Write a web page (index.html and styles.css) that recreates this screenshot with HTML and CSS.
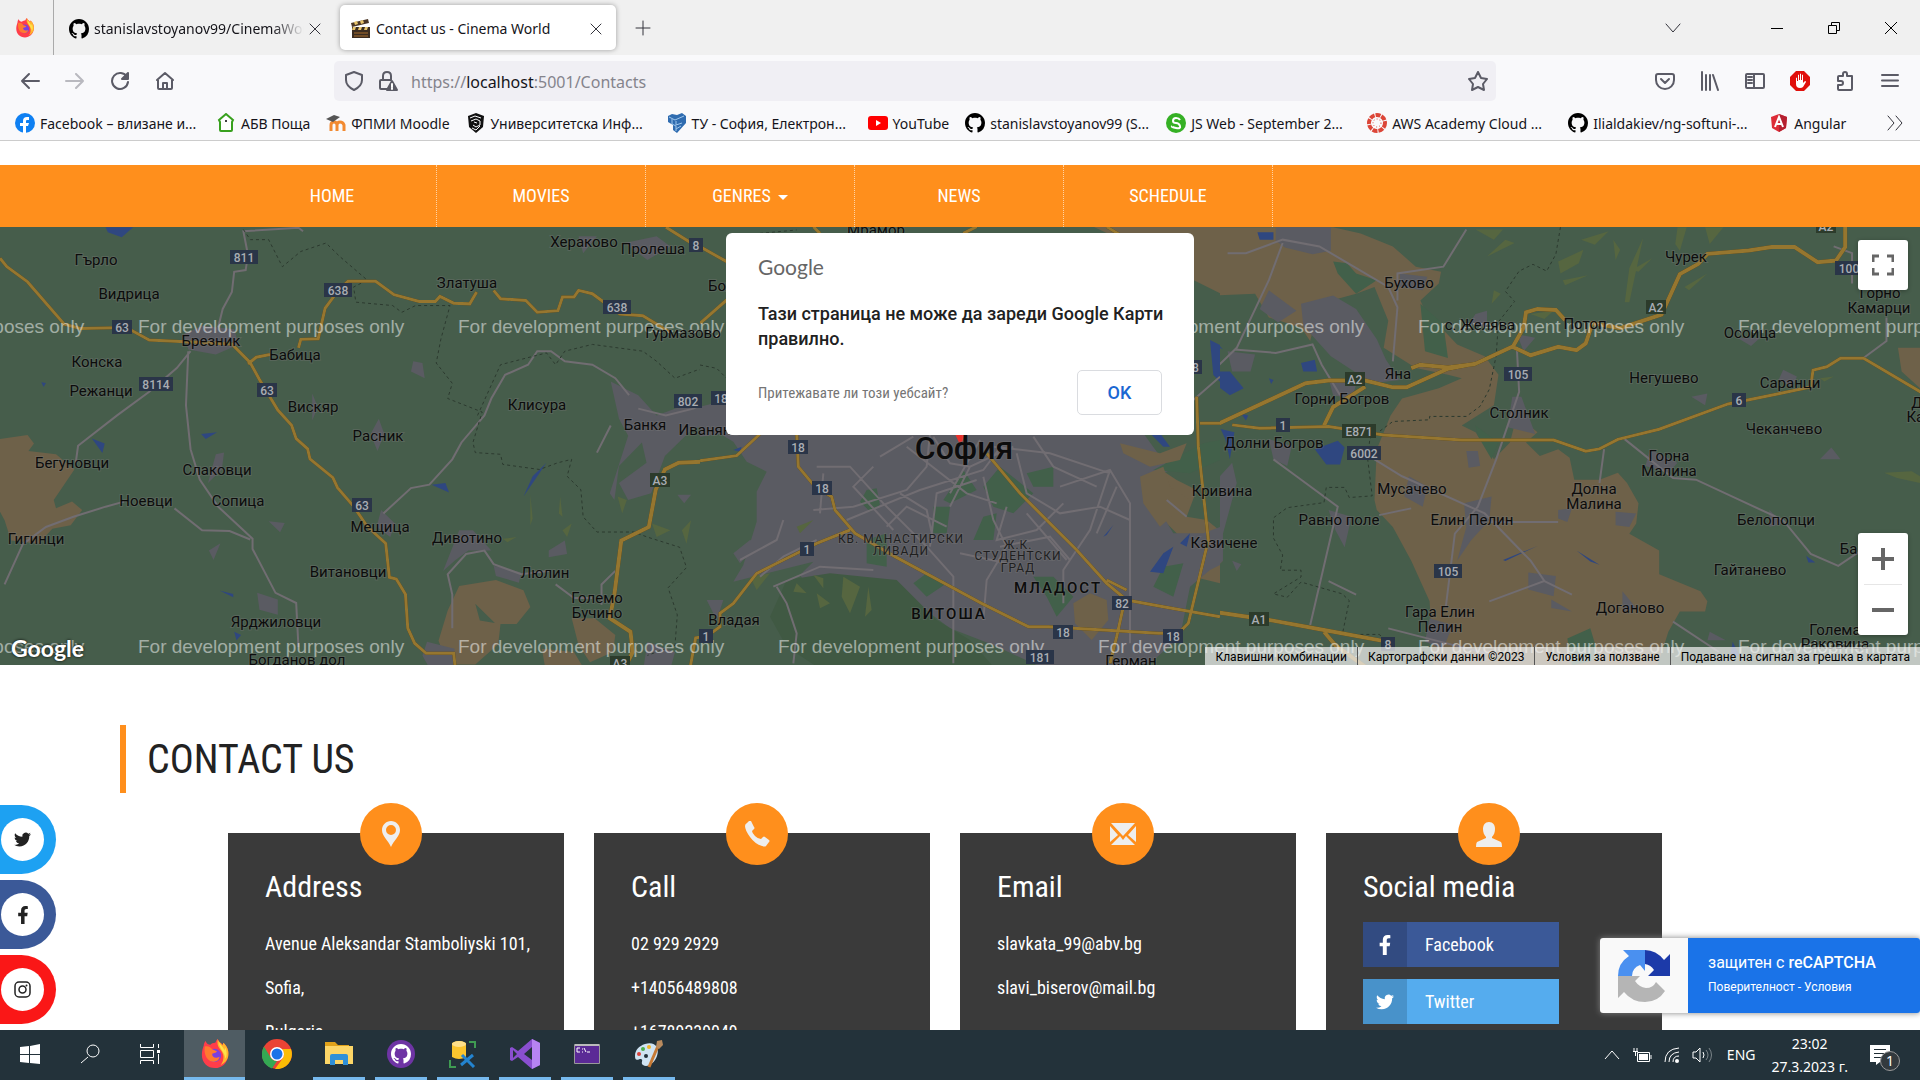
FILE: index.html
```html
<!DOCTYPE html>
<html lang="bg">
<head>
<meta charset="utf-8">
<title>Contact us - Cinema World</title>
<link rel="stylesheet" href="styles.css">
</head>
<body>
<svg class="defs" aria-hidden="true">
  <symbol id="github" viewBox="0 0 16 16"><path d="M8 0C3.58 0 0 3.58 0 8c0 3.54 2.29 6.53 5.47 7.59.4.07.55-.17.55-.38 0-.19-.01-.82-.01-1.49-2.01.37-2.53-.49-2.69-.94-.09-.23-.48-.94-.82-1.13-.28-.15-.68-.52-.01-.53.63-.01 1.08.58 1.23.82.72 1.21 1.87.87 2.33.66.07-.52.28-.87.51-1.07-1.78-.2-3.64-.89-3.64-3.95 0-.87.31-1.59.82-2.15-.08-.2-.36-1.02.08-2.12 0 0 .67-.21 2.2.82.64-.18 1.32-.27 2-.27s1.36.09 2 .27c1.53-1.04 2.2-.82 2.2-.82.44 1.1.16 1.92.08 2.12.51.56.82 1.27.82 2.15 0 3.07-1.87 3.75-3.65 3.95.29.25.54.73.54 1.48 0 1.07-.01 1.93-.01 2.2 0 .21.15.46.55.38A8.01 8.01 0 0016 8c0-4.42-3.58-8-8-8z"/></symbol>
  <symbol id="twitter" viewBox="0 0 24 24"><path d="M23.953 4.57a10 10 0 01-2.825.775 4.958 4.958 0 002.163-2.723c-.951.555-2.005.959-3.127 1.184a4.92 4.92 0 00-8.384 4.482C7.69 8.095 4.067 6.13 1.64 3.162a4.822 4.822 0 00-.666 2.475c0 1.71.87 3.213 2.188 4.096a4.904 4.904 0 01-2.228-.616v.06a4.923 4.923 0 003.946 4.827 4.996 4.996 0 01-2.212.085 4.936 4.936 0 004.604 3.417 9.867 9.867 0 01-6.102 2.105c-.39 0-.779-.023-1.17-.067a13.995 13.995 0 007.557 2.209c9.053 0 13.998-7.496 13.998-13.985 0-.21 0-.42-.015-.63A9.935 9.935 0 0024 4.59z"/></symbol>
  <symbol id="facebook" viewBox="0 0 320 512"><path d="M279.14 288l14.22-92.66h-88.91v-60.13c0-25.35 12.42-50.06 52.24-50.06h40.42V6.26S260.43 0 225.36 0c-73.22 0-121.08 44.38-121.08 124.72v70.62H22.89V288h81.39v224h100.17V288z"/></symbol>
  <symbol id="firefox" viewBox="0 0 32 32">
    <path fill="#ff3d4a" d="M4 7c0-2 1-4 2-5 1 3 3 4 5 4 1-1 3-2 5-2 1 0 1-3 3-4 1 4 4 4 5 6l1-2c4 4 6 8 5 14-1 8-7 13-14 13C8 31 2 25 2 17c0-4 1-7 2-10z"/>
    <path fill="#ffb52b" d="M19 0c1 4 4 4 5 7l1-3c5 5 6 10 5 15-1 4-4 7-8 9 3-4 4-9 2-13-1-4-7-6-5-15z"/>
    <path fill="#ffe14b" d="M20 3c1 3 4 4 6 9l1-3c2 5 2 9 0 12 0-6-6-9-7-18z"/>
    <circle cx="15.500" cy="17.500" r="7" fill="#7b3fe0"/>
    <path fill="#ff7a2f" d="M5 8c3-1 6 0 8 3l5 2c0 2-5 2-5 3 0 4 4 5 8 3-1 4-4 6-8 5-6-1-9-8-8-16z"/>
  </symbol>
  <symbol id="sh1" viewBox="0 0 34 16"><rect x="10" y="1" width="14" height="14"/></symbol>
  <symbol id="sh2" viewBox="0 0 34 16"><rect x="7" y="1" width="20" height="14"/></symbol>
  <symbol id="sh3" viewBox="0 0 34 16"><rect x="3" y="1" width="28" height="14"/></symbol>
  <symbol id="sh4" viewBox="0 0 34 16"><rect x="0" y="1" width="34" height="14"/></symbol>
</svg>

<header class="browser">
  <div class="tabs">
    <div class="tab-pinned"><svg class="i20"><use href="#firefox"/></svg></div>
    <div class="tab">
      <svg class="i20"><use href="#github"/></svg>
      <span class="tab-title tab-title-fade">stanislavstoyanov99/CinemaWorld</span>
      <button class="plain" aria-label="Close tab"><svg width="12" height="12" class="line"><path d="M1 1l10 10M11 1L1 11"/></svg></button>
    </div>
    <div class="tab tab-active">
      <svg class="i20" viewBox="0 0 20 20"><path fill="#3b2c20" d="M1 8h18v11H1z"/><path fill="#4a3525" d="M0 4l17-4 1 4L1 8z"/><path fill="#e8c46b" d="M3 3l3-1 1 3-3 1zM9 2l3-1 1 3-3 1zM2 8h3l-1 3H1zM8 8h3l-1 3H7zM14 8h3l-1 3h-3z"/><path stroke="#a86d2c" d="M3 14h14M3 17h14"/></svg>
      <span class="tab-title">Contact us - Cinema World</span>
      <button class="plain" aria-label="Close tab"><svg width="12" height="12" class="line"><path d="M1 1l10 10M11 1L1 11"/></svg></button>
    </div>
    <button class="plain tab-new" aria-label="New tab"><svg width="16" height="16" class="line"><path d="M8 1v14M1 8h14"/></svg></button>
    <div class="window-controls">
      <button class="plain win-list" aria-label="List tabs"><svg width="16" height="16" class="line"><path d="M1 4l7 8 7-8"/></svg></button>
      <button class="plain" aria-label="Minimize"><svg width="14" height="14" class="black"><path d="M1 7.500h12"/></svg></button>
      <button class="plain" aria-label="Restore"><svg width="14" height="14" class="black"><path d="M1.500 4.500h8v8h-8zM4.500 4V1.500h8v8H10"/></svg></button>
      <button class="plain" aria-label="Close"><svg width="14" height="14" class="black"><path d="M1 1l12 12M13 1L1 13"/></svg></button>
    </div>
  </div>
  <div class="toolbar">
    <div class="nav-buttons">
      <button class="plain" aria-label="Back"><svg class="i20 line"><path d="M19 10H2M9 3l-7 7 7 7"/></svg></button>
      <button class="plain faded" aria-label="Forward"><svg class="i20 line"><path d="M1 10h17M11 3l7 7-7 7"/></svg></button>
      <button class="plain" aria-label="Reload"><svg class="i20 line"><path d="M17 6a8 8 0 1 0 1 5"/><path fill="#5b5b66" d="M18 2v6h-6z"/></svg></button>
      <button class="plain" aria-label="Home"><svg class="i20 line"><path d="M2 9l8-7 8 7M3 9v8q0 1 1 1h12q1 0 1-1V9M8 18v-6h4v6"/></svg></button>
    </div>
    <div class="urlbar">
      <svg class="i20 line"><path d="M10 1l8 3v5q0 6-8 10Q2 15 2 9V4z"/></svg>
      <svg class="i20 line"><path d="M5 9V5q0-4 4-4t4 4v4M9 18H3q-1 0-1-1v-7q0-1 1-1h10"/><path fill="#5b5b66" d="M14 10l5 9H9z"/><path stroke="#fff" d="M14 13v3M14 17v1"/></svg>
      <div class="url"><span class="url-dim">https://</span>localhost<span class="url-dim">:5001/Contacts</span></div>
      <button class="plain" aria-label="Bookmark this page"><svg class="i20 line"><path d="M10 1l3 6 6 1-4 5 1 6-6-3-6 3 1-6-4-5 6-1z"/></svg></button>
    </div>
    <div class="tool-icons">
      <button class="plain" aria-label="Pocket"><svg class="i20 line"><path d="M3 3h14q2 0 2 2v4a9 9 0 0 1-18 0V5q0-2 2-2zM6 8l4 4 4-4"/></svg></button>
      <button class="plain" aria-label="Library"><svg class="i20 line"><path d="M2 1v18M6 4v15M10 4v15M13 4l5 15"/></svg></button>
      <button class="plain" aria-label="Sidebars"><svg class="i20 line"><path d="M2 3h16q1 0 1 1v12q0 1-1 1H2q-1 0-1-1V4q0-1 1-1zM9 3v14M3 6h4M3 9h4M3 12h4"/></svg></button>
      <button class="plain" aria-label="AdBlock"><svg class="i20"><path fill="#e0100c" d="M6 0h8l6 6v8l-6 6H6l-6-6V6z"/><path fill="#fff" d="M6 7q1-1 1 0v3h1V4q1-1 1 0v5h1V3q1-1 1 0v6h1V4q1-1 1 0v8l2-2q1 0 1 1l-3 5q-1 1-3 1-4 0-4-4z"/></svg></button>
      <button class="plain" aria-label="Extensions"><svg class="i20 line"><path d="M3 8V6q0-1 1-1h4V3q0-2 2-2t2 2v2h5v13q0 1-1 1H4q-1 0-1-1v-4h3q2 0 2-2t-2-2H3z"/></svg></button>
      <button class="plain" aria-label="Menu"><svg class="i20 line"><path d="M2 4h16M2 9.500h16M2 15h16"/></svg></button>
    </div>
  </div>
  <nav class="bookmarks" aria-label="Bookmarks">
    <a class="bookmark long" href="#"><svg class="i20" viewBox="0 0 20 20"><circle cx="10" cy="10" r="10" fill="#0f80f2"/><path fill="#fff" d="M8 20v-7H5v-3h3V8q0-4 4-4h2v3h-2q-1 0-1 1v2h3l-1 3h-2v7z"/></svg>Facebook – влизане и...</a>
    <a class="bookmark" href="#"><svg class="i20" viewBox="0 0 20 20"><path fill="#fff" stroke="#38a01e" stroke-width="2" d="M5 18q-1 0-1-1V9L3 7l7-6 7 6-1 2v8q0 1-1 1z"/><circle cx="10" cy="8" r="1"/></svg>АБВ Поща</a>
    <a class="bookmark" href="#"><svg class="i20" viewBox="0 0 20 20"><path fill="none" stroke="#f28a31" stroke-width="3" d="M5 18v-6q0-3 3-3t3 3v6M11 12q0-3 3-3t4 3v6"/><path fill="#555" d="M0 6l8-4 6 2-7 5z"/></svg>ФПМИ Moodle</a>
    <a class="bookmark long" href="#"><svg class="i20" viewBox="0 0 20 20"><path fill="#111" d="M2 3l8-3 8 3-1 11-7 6-7-6z"/><path fill="none" stroke="#fff" d="M4 5l5-2 6 2M5 8l5-2 4 2v4l-4 2-3-2M8 9l3 1M6 15l4 2 4-4"/></svg>Университетска Инф...</a>
    <a class="bookmark long" href="#"><svg class="i20" viewBox="0 0 20 20"><path fill="#2f6cb0" d="M1 3l4-2 5 1 5-2 4 3v7l-9 10-4-3v-5l-5-3z"/><path fill="none" stroke="#9fc6ec" d="M2 4l6 3 9-4M5 6v5l4 2v5M9 8v4l6-2M9 16l5-3"/></svg>ТУ - София, Електрон...</a>
    <a class="bookmark" href="#"><svg class="i20" viewBox="0 0 20 20"><rect y="3" width="20" height="14" rx="3" fill="#f00"/><path fill="#fff" d="M8 7l5 3-5 3z"/></svg>YouTube</a>
    <a class="bookmark long" href="#"><svg class="i20"><use href="#github"/></svg>stanislavstoyanov99 (S...</a>
    <a class="bookmark long" href="#"><svg class="i20" viewBox="0 0 20 20"><circle cx="10" cy="10" r="10" fill="#35b024"/><path fill="none" stroke="#fff" stroke-width="2" d="M14 7q-1-2-4-2T7 8q0 2 3 2t4 3-4 2-4-2"/></svg>JS Web - September 2...</a>
    <a class="bookmark long" href="#"><svg class="i20" viewBox="0 0 20 20"><circle cx="10" cy="10" r="8" fill="none" stroke="#dc4638" stroke-width="4" stroke-dasharray="5 1"/><circle cx="10" cy="10" r="4" fill="none" stroke="#dc4638" stroke-dasharray="1 2"/></svg>AWS Academy Cloud ...</a>
    <a class="bookmark long" href="#"><svg class="i20"><use href="#github"/></svg>Ilialdakiev/ng-softuni-...</a>
    <a class="bookmark" href="#"><svg class="i20" viewBox="0 0 20 20"><path fill="#dd2c37" d="M10 1l8 3-1 11-7 4-7-4L2 4z"/><path fill="#b52030" d="M10 1l8 3-1 11-7 4z"/><path fill="none" stroke="#fff" stroke-width="2" d="M6 14l4-10 4 10M8 11h4"/></svg>Angular</a>
    <button class="plain bookmarks-more" aria-label="More bookmarks"><svg width="16" height="16" class="line"><path d="M1 1l6 7-6 7M9 1l6 7-6 7"/></svg></button>
  </nav>
</header>

<main class="page">
  <nav class="site-nav">
    <ul class="container menu">
      <li><a href="#">HOME</a></li>
      <li><a href="#">MOVIES</a></li>
      <li><a href="#">GENRES <span class="caret"></span></a></li>
      <li><a href="#">NEWS</a></li>
      <li><a href="#">SCHEDULE</a></li>
    </ul>
  </nav>

  <section class="map">
    <svg class="map-canvas" viewBox="0 0 1920 438" preserveAspectRatio="xMidYMid slice">
      <rect width="1920" height="438" fill="#465d4b"/>
      <!-- west tile -->
      <svg x="0" y="-82" width="720" height="530" viewBox="0 0 1568 1568" preserveAspectRatio="none">
        <path class="field" d="M0 870l60-12 14 25-12 22 60 10 40 45-25 50-20 40 5 25 35-20 22 25-25 45-40 10-30 45-60-10-14-60-20-50zM1000 1305l80-18 60 30 15 50-30 50-45 0-45-60 10 50 45 10-5 60-50 60-60 0-20-70 20-90zM1245 1400l50 0 45 50-5 50-50 30-25-50zM1180 1490l70 10 30 68-90 0z"/>
        <path class="city" d="M400 560l40-25 70 10 10 45-50 30-60-15zM900 640l20 5 5 45-30-20zM825 810l12 45-15 50-15-50zM470 915l18-5-5 50-30 40zM680 735l12 40-12 40zM585 1113l35 5-10 28zM455 1200l25-22-15 50zM560 1325l45 20 0 45-40-15zM1000 1140l30 0 40 60-50 0-30 30-25 30zM1075 1245l60 20-5 30-50-20zM1195 1200l35-30 5 40-40 10zM1330 700l60 40 40 60 60-30 78-40v90l-60 20-60 80-30 110-50 20-20-50 60-60-10-60-50 70-10 100-10-20 40-170-20-50zM930 1470l60 20 0 60-50 10-20-50zM1410 1470l60 30-10 50-60 10zM1360 290l70-20 30 30-50 40zM1260 270l40 0-30 50zM1475 1035l30 0-15 25zM830 1080l30 40-10 40-30-30z"/>
        <path class="water" d="M230 243h60l-25 30-30-15zM200 868l28 15-5 28zM438 855l35-5-25 20zM940 1005l30-5 8 28zM478 1318l30 10 0 10zM1190 940l-30 40-20 60 25-50zM510 1440l15 10-10 15zM90 702l10 2-5 12z"/>
        <path class="hill" d="M1155 1035l5 70-5 20zM1220 1040l5 60-8-10zM1255 1080l-20 80-10-20 20-20zM1345 1040l20 10-10 40zM1420 1120l40 20-30 20zM1505 1110l-10 70-10-40zM1095 1165l30-5-20 15z"/>
        <g class="minor"><path d="M660 255l-10-10-120 10 10 70-5 45-25 5-5 60-20 50-10 55M415 610l-30 50-60 70-70 70-85 90-5 50M410 610l-5 160 10 130 20 90 40 80 75 95 0 30 50 130 45 30 5 130M10 1300l40-120 50-50 60-30 70-30 40-15M380 1075l60 65 60 2 45 25M835 1090l60-75 40-10 50-75 20-50 50-80 15-50 30-70 50-30 20-40 30 0 30 30 60 10 50 40 30 50M985 1430l0-100-10-60 40-60 40-10 20 40 60 30 60-10M1390 780l60 20 60-20 58-40M1330 830l-30 80M1210 1300l40 40 40 0M1310 1360l0-60 30-40"/></g>
        <g class="border"><path d="M530 250l15 30 40 0 30 80 40-45 55-25 30 40 60 70-30 20 5 45 80 10 20 20 30-20 75 0-20 100-10 70 35 60-10 45 75 40-20 90 5 30 55 5 5 30 80 15 40-20 30-10-10 50 30 40 5 80 30 45 80 0 30 15 70 30 15 60-40 60 20 80-5 90-60 30M1040 800l50-150 100-35 20 35 20-40 60-20 110 20 30 30 40 50 50-25 45 5"/></g>
        <g class="road"><path d="M0 335l15 25 45 45 80 125 35 13 100-3 50 37 180 12 40 55 20 50 40 90 30 45 10 40 25 30 5 30 50 55 10 30 35 55 30 60 40 50 8 100 15 5 20 45 5 100 15 45 25 30 60 0 5 60M540 648l18-20 30-8M650 600l5-25 38-2 15-90 30-55 20-25 60 0 40 40 55 20 35 0 10-15 30 20 35 2 15-35M1075 430l15 25 55 5 25 35 45-5 10-40 25 0 10-20 30 10 60 60 50 5 60 50M1530 530l38-55M1450 243l118 100M1500 1568l15-110 53-10"/></g>
        <g class="motorway"><path d="M1568 935l-90 5-30 20-20 60-15 110-60 40-15 160-10 70 45 40 5 60-25 68"/></g>
      </svg>
      <!-- east tile -->
      <svg x="1200" y="-82" width="720" height="530" viewBox="0 0 1568 1568" preserveAspectRatio="none">
        <path class="field" d="M0 243H290L350 262 420 300 470 360 525 375 520 410 480 460 490 490 560 590 620 625 650 680 640 770 570 830 600 850 640 930 675 880 690 800 735 850 710 880 740 920 780 900 805 925 815 990 870 990 910 970 930 1000 955 1060 950 1120 935 1150 1000 1200 1000 1270 1090 1320 1105 1350 1100 1380 1045 1380 1020 1440 990 1568H510L500 1350 460 1230 420 1130 385 1080 380 1050 385 900 415 800 440 750 520 720 570 690 540 680 470 660 400 600 410 520 380 420 340 440 260 470 240 580 220 540 150 510 120 440 30 445 0 430zM1520 600l48 0v120l-40-50zM0 1110l20 60 30 60-50 70z"/>
        <path class="green" d="M290 345l30 5 20 30 45 20-45 40-40-60zM480 470l50 60 10 100-50-20zM600 830l30 30 20 20-15 50-30-70zM800 1460l50-30 20 90-60 20z"/>
        <path class="city" d="M165 243l120 0 0 70-40 10-60-20-20-20zM150 430l60 60-40 35-40-40zM220 470l70-25 50 40 45 90 20 60 30 60-60 10-90-80-60-90zM60 610l60 10-10 50-40 0zM435 380l60 10-10 40-50-10zM600 500l25-10 0 50-40-10zM690 560l40 10-25 40zM680 745l20 0 30 110-60-20zM580 905l25 0 5 45-25 5zM455 980l40 30-10 60-40-30zM575 1060l60-20-5 70-40 60-30 60 20-100zM780 1080l30-5-10 40-20-10zM905 1085l45 5-15 40-30-5zM715 1265l60 10-5 60-55-20zM765 1345l45 35-45-10zM920 1320l30 50-30 10zM1070 745l35-10-5 35zM1350 930l25-35 20 35zM1170 570l50 0-20 25zM1270 665l30 20-10 30-30-20zM1110 1440l35 25-40 0zM280 1080l50 20-15 90-20-50zM150 870l50 20-10 60-30-20zM0 970l30 30 40-60 10 60-30 150 0 80-50 60zM70 1230l20 10-10 20zM980 900l60 40-20 30-50-20zM500 1400l50 20-20 70-40-20zM1240 1080l30 40-30 10zM280 690l60 20-10 40-40-10z"/>
        <path class="water" d="M125 258l35 0 0 22-30 0zM40 245l25 10zM220 645l30-10 5 35-30 0zM35 670l30 0 30 50-30 20-30-30zM250 900l50-25 15 20-10 50-30 0zM30 575l20 30-20-15zM45 840l30 10-10 80-10-60zM150 690l10 5-5 12zM660 1228l75-42-70 45zM820 1200l50 42-20-10zM1160 1470l15 40-20 0zM1320 1215l20 20-15 0zM90 795l15 5-5 15z"/>
        <path class="hill" d="M600 250l60 0-20 30zM625 330l40-50 20 10zM780 345l55-35-10 40-40 30zM830 280l60-25-30 40zM790 400l55-15-50 30zM900 280l15 30-10 30zM935 365l30-90-30 190-10 0zM940 370l45-35-30 40zM1040 243l20 0-15 70-10-20zM1055 420l50-40-40 50zM640 430l15 10-20 30zM1100 243l40 0-30 50zM1490 970l60-5 18 15v20l-50-15zM1350 690l30-5-20 15zM720 500l50-10-20 25z"/>
        <g class="minor"><path d="M60 320l40 0 80-40 80 20 150 120 20 60-10 160M180 290l-30 110-70 200-80 105M75 605l90 10 80-25 20 60 40 90M430 460l0-80 100-20 50-110M690 600l5 130-50 200-40 140-50 80-20 220M380 930l60 50 180 110 100 140 30 60-120 60M390 1095l70-20M160 930l50 50 90 90-60 350M630 1115h150M750 1290l60 40M880 900l-10 100M920 865l110 120 50 5 190 120 60 100 60 35 60-55M1495 510l0 70-50 50M1030 1410l100 90M410 1430l230 80M0 1020l20 200M1380 300l40 20 0 90M280 1290l60 40"/></g>
        <g class="border"><path d="M785 243l-10 80-20 50-30-20-30 20-30 60 20 30-35 60-5 100-15 100-20 50-30 30-80 0 0 10-80 5-50 50-5 60 10 110-50 5-10-30-40 0-5 45-80 15-30 30 0 60 20 50-5 45 45 0 0 20-60 50 30 10 30-45 90 35 15 20-15 100 80 0 30 30"/></g>
        <g class="motorway"><path d="M0 825l40 0 190-120 50-8 80 0 60 20 30 0 90-55 60-15 80-50 40 25 60-25 40 10 20-20 15-60 60 15 90-40 40-120 40-30 20-30 90-10 50-10 50 0 50 45 40-5 20-40 0-60M460 660l20-10 60 8 60-10M360 715l-70 60-20 55M680 600l25-60 5-45 25-10 40 3 20 30M0 1375l150 30 120 30 140 35M270 1440l25 40 90 88"/></g>
        <g class="road"><path d="M70 828l60 10 150-5 120 25 170 15 200 0 70 33 30-7 40-28 90-30 150-75 110-30 70-20 5-50 30-10 30-25 50 0 125 100M0 870l15 160 8 200-23 100"/></g>
      </svg>
      <!-- central tile -->
      <svg x="700" y="-7" width="520" height="450" viewBox="0 0 1560 1350">
        <path fill="#465d4b" d="M0 0h1560v1350H0z"/>
        <path class="field" d="M1180 20h380v200l-80-40-90-60zM1370 740l60 40 60 30-30 80 60 10 100 80-60 110-80-20 10-70-90-90-60-60z"/>
        <path class="city" d="M150 640h1180l80 110-60 30 10 60 60 100 90 0 80-30v110l-60 30-60 50-30 150-90 80-40 5-300 0-130-60-130-50-80-60-60-50-120-30-110-10-60 20-20-30 40-40-160 40-80 20 30-50 40-130 0-90 30-60-60-30-40-60-50-30zM100 1000l50-40 30 10-60 60zM0 560l80-20v100l-80 10zM20 1140l50 0-20 60zM180 1020l80-10-60 50z"/>
        <path class="green" d="M500 810l30-5 10 50-30 20-30-30zM790 750l40 60-80 40-20-10zM700 860l50 0-10 80-40 0zM850 800l50-60 100 80-60 60-60-20zM850 890l40-10-10 80-60 0zM1360 750l150-80 50-10v60l-90 40zM980 760l80-20 0 60-60 0zM1000 1070l60 0 60 60-50 60-30-60zM1360 1100l30-60 60-10-30 100zM640 1090l40-30 60 30-60 40zM500 960l60-20 0 100-60-10z"/>
        <path class="field" d="M1120 1150l50-30 50 20 5 60-50 60-50-50zM1260 670l120 30 80-30-20 50-90 20-80-40zM1320 770l70-30 20 60 60 40-90 80-50-70z"/>
        <path fill="#405943" d="M260 1080l130-20 200 20 120 120 100 60 70 80H350l-90-60-50-90z"/>
        <path class="hill" d="M430 1070l50 30-30 80-25-50zM350 1120l40 30-30 15zM505 1100l10 70-20 20zM340 1065l30 10 0 30zM290 1090l30 30-40-5zM290 920l50-20-40 40zM150 1070l60-10-40 50z"/>
        <path class="water" d="M1350 640l30 0 30 40-20 0zM1390 1000l30-20-30 80-40-5zM1440 970l30-30-10 40zM1210 950l30-35-20 30zM1530 360l30 15v110l-20-20zM100 690l25-10-5 15z"/>
        <g class="minor"><path d="M350 740l100 0 100 110 130 130 80 90 0 260M340 870l120-10 160-50 60-70 10-100M520 740l-60 60 120 130M440 900l220-90 190-60 60-80M700 650l50 80 60 10 130-60M750 860l60-120M690 980l20-160 120-40M850 770l30 130 40 80-60 100-10 120M920 860l-30 100 120-30 80-80M950 700l30 120 100 60 120-20 90 40M1230 750l-60 180-80 120 0 100M1080 800l150-50 60 100 0 420M640 650l-100 60M1000 650l60 90 130 60M880 680l170 20 180 60M600 820l80 50 20 90M620 680l180 140 90 30M560 920l60-60 120 60M840 660l-90 160M350 960l-100 50-70 60M250 900l-20 60-110 60M230 1100l30 50 30 90-10 90M220 1100l140-60 160 10M1400 840l60 50M1480 540l80-70M370 760l-10 120M900 980l150-30 60 70M780 1000l140 30M980 880l120 140M1250 800l-60 140"/></g>
        <g class="road"><path d="M290 640l5 100 50 60 50 30 10 40 60 70 120 70 260 140 120 60 20 10 60 0 330 20 60 0 30-30 60-250-30-280-5-150M450 930l-100 40-100 50-80 40-70 90-40 30 0 40-40 30M860 700l100 120 170 170 90 100 60 50 110 20 170 30M1270 1160l-20 90-20 80M1500 610h60M0 80l80 45M0 310l80-70M340 20l20 20M790 40l40-20M0 722l110-15 70-65M1220 20l50 30M1220 1080l60 30"/></g>
        <g class="border"><path d="M180 40l110-10M0 435l50 10 30 30"/></g>
        <path fill="#e8312c" d="M764 640h32l-14 38z"/>
      </svg>

      <g class="watermark">
        <text x="-182" y="106">For development purposes only</text><text x="138" y="106">For development purposes only</text><text x="458" y="106">For development purposes only</text><text x="778" y="106">For development purposes only</text><text x="1098" y="106">For development purposes only</text><text x="1418" y="106">For development purposes only</text><text x="1738" y="106">For development purposes only</text>
        <text x="-182" y="426">For development purposes only</text><text x="138" y="426">For development purposes only</text><text x="458" y="426">For development purposes only</text><text x="778" y="426">For development purposes only</text><text x="1098" y="426">For development purposes only</text><text x="1418" y="426">For development purposes only</text><text x="1738" y="426">For development purposes only</text>
      </g>

      <g class="places">
        <text x="96" y="38">Гърло</text><text x="129" y="72">Видрица</text><text x="211" y="119">Брезник</text><text x="295" y="133">Бабица</text><text x="97" y="140">Конска</text><text x="101" y="169">Режанци</text><text x="313" y="185">Вискяр</text><text x="378" y="214">Расник</text><text x="72" y="241">Бегуновци</text><text x="217" y="248">Слаковци</text><text x="146" y="279">Ноевци</text><text x="238" y="279">Сопица</text><text x="380" y="305">Мещица</text><text x="36" y="317">Гигинци</text><text x="467" y="316">Дивотино</text><text x="348" y="350">Витановци</text><text x="545" y="351">Люлин</text><text x="597" y="376">Големо</text><text x="597" y="391">Бучино</text><text x="276" y="400">Ярджиловци</text><text x="297" y="438">Богданов дол</text><text x="584" y="20">Хераково</text><text x="653" y="27">Пролеша</text><text x="467" y="61">Златуша</text><text x="537" y="183">Клисура</text><text x="645" y="203">Банкя</text><text x="709" y="208">Иваняне</text><text x="745" y="64">Божурище</text><text x="683" y="111">Гурмазово</text><text x="734" y="398">Владая</text><text x="876" y="8">Мрамор</text><text x="1131" y="439">Герман</text><text x="1222" y="269">Кривина</text><text x="1224" y="321">Казичене</text>
        <text x="1409" y="61">Бухово</text><text x="1686" y="35">Чурек</text><text x="1480" y="103">с. Желява</text><text x="1585" y="102">Потоп</text><text x="1750" y="111">Осоица</text><text x="1880" y="71">Горно</text><text x="1879" y="86">Камарци</text><text x="1398" y="152">Яна</text><text x="1342" y="177">Горни Богров</text><text x="1664" y="156">Негушево</text><text x="1790" y="161">Саранци</text><text x="1519" y="191">Столник</text><text x="1784" y="207">Чеканчево</text><text x="1274" y="221">Долни Богров</text><text x="1669" y="234">Горна</text><text x="1669" y="249">Малина</text><text x="1412" y="267">Мусачево</text><text x="1594" y="267">Долна</text><text x="1594" y="282">Малина</text><text x="1339" y="298">Равно поле</text><text x="1472" y="298">Елин Пелин</text><text x="1776" y="298">Белопопци</text><text x="1870" y="327">Байлово</text><text x="1750" y="348">Гайтанево</text><text x="1630" y="386">Доганово</text><text x="1440" y="390">Гара Елин</text><text x="1440" y="405">Пелин</text><text x="1835" y="408">Голема</text><text x="1835" y="422">Раковица</text><text x="1934" y="181">Долно</text><text x="1938" y="195">Камарци</text>
        <text class="capital" x="964" y="232">София</text>
        <g class="district"><text x="901" y="316">КВ. МАНАСТИРСКИ</text><text x="901" y="328">ЛИВАДИ</text><text x="1018" y="322">Ж.К.</text><text x="1018" y="333">СТУДЕНТСКИ</text><text x="1018" y="345">ГРАД</text></g>
        <g class="district-big"><text x="1058" y="366">МЛАДОСТ</text><text x="949" y="392">ВИТОША</text></g>
      </g>

      <g class="shields">
        <svg x="227" y="22"><use href="#sh3" width="34" height="16"/><text x="17" y="13">811</text></svg>
        <svg x="321" y="55"><use href="#sh3" width="34" height="16"/><text x="17" y="13">638</text></svg>
        <svg x="600" y="72"><use href="#sh3" width="34" height="16"/><text x="17" y="13">638</text></svg>
        <svg x="679" y="10"><use href="#sh1" width="34" height="16"/><text x="17" y="13">8</text></svg>
        <svg x="105" y="92"><use href="#sh2" width="34" height="16"/><text x="17" y="13">63</text></svg>
        <svg x="139" y="149"><use href="#sh4" width="34" height="16"/><text x="17" y="13">8114</text></svg>
        <svg x="250" y="155"><use href="#sh2" width="34" height="16"/><text x="17" y="13">63</text></svg>
        <svg x="345" y="270"><use href="#sh2" width="34" height="16"/><text x="17" y="13">63</text></svg>
        <svg x="671" y="166"><use href="#sh3" width="34" height="16"/><text x="17" y="13">802</text></svg>
        <svg x="704" y="163"><use href="#sh2" width="34" height="16"/><text x="17" y="13">18</text></svg>
        <svg x="689" y="401"><use href="#sh1" width="34" height="16"/><text x="17" y="13">1</text></svg>
        <svg x="781" y="212"><use href="#sh2" width="34" height="16"/><text x="17" y="13">18</text></svg>
        <svg x="805" y="253"><use href="#sh2" width="34" height="16"/><text x="17" y="13">18</text></svg>
        <svg x="790" y="314"><use href="#sh1" width="34" height="16"/><text x="17" y="13">1</text></svg>
        <svg x="1105" y="368"><use href="#sh2" width="34" height="16"/><text x="17" y="13">82</text></svg>
        <svg x="1046" y="397"><use href="#sh2" width="34" height="16"/><text x="17" y="13">18</text></svg>
        <svg x="1156" y="401"><use href="#sh2" width="34" height="16"/><text x="17" y="13">18</text></svg>
        <svg x="1023" y="422"><use href="#sh3" width="34" height="16"/><text x="17" y="13">181</text></svg>
        <svg x="1175" y="132"><use href="#sh2" width="34" height="16"/><text x="17" y="13">18</text></svg>
        <svg x="1832" y="33"><use href="#sh3" width="34" height="16"/><text x="17" y="13">100</text></svg>
        <svg x="1501" y="139"><use href="#sh3" width="34" height="16"/><text x="17" y="13">105</text></svg>
        <svg x="1722" y="165"><use href="#sh1" width="34" height="16"/><text x="17" y="13">6</text></svg>
        <svg x="1266" y="190"><use href="#sh1" width="34" height="16"/><text x="17" y="13">1</text></svg>
        <svg x="1347" y="218"><use href="#sh4" width="34" height="16"/><text x="17" y="13">6002</text></svg>
        <svg x="1431" y="336"><use href="#sh3" width="34" height="16"/><text x="17" y="13">105</text></svg>
        <svg x="1371" y="409"><use href="#sh1" width="34" height="16"/><text x="17" y="13">8</text></svg>
      </g>
      <g class="shields highway">
        <svg x="643" y="245"><use href="#sh2" width="34" height="16"/><text x="17" y="13">A3</text></svg>
        <svg x="603" y="428"><use href="#sh2" width="34" height="16"/><text x="17" y="13">A3</text></svg>
        <svg x="1639" y="72"><use href="#sh2" width="34" height="16"/><text x="17" y="13">A2</text></svg>
        <svg x="1338" y="144"><use href="#sh2" width="34" height="16"/><text x="17" y="13">A2</text></svg>
        <svg x="1809" y="-9"><use href="#sh2" width="34" height="16"/><text x="17" y="13">A2</text></svg>
        <svg x="1342" y="196"><use href="#sh4" width="34" height="16"/><text x="17" y="13">E871</text></svg>
        <svg x="1242" y="384"><use href="#sh2" width="34" height="16"/><text x="17" y="13">A1</text></svg>
      </g>
    </svg>

    <a class="map-logo" href="#">Google</a>
    <button class="map-button map-full" aria-label="Full screen"><svg width="22" height="22"><path fill="none" stroke="#666" stroke-width="3" d="M1 8V2h6M15 2h6v6M21 14v6h-6M7 20H1v-6"/></svg></button>
    <div class="map-button map-zoom">
      <button class="plain" aria-label="Zoom in"><svg width="22" height="22"><path stroke="#666" stroke-width="4" d="M0 11h22M11 0v22"/></svg></button>
      <button class="plain" aria-label="Zoom out"><svg width="22" height="22"><path stroke="#666" stroke-width="4" d="M0 11h22"/></svg></button>
    </div>
    <div class="map-credits">
      <button>Клавишни комбинации</button>
      <span>Картографски данни ©2023</span>
      <a class="narrow" href="#">Условия за ползване</a>
      <a href="#">Подаване на сигнал за грешка в картата</a>
    </div>

    <div class="dialog" role="dialog">
      <div class="dialog-logo">Google</div>
      <p class="dialog-text">Тази страница не може да зареди Google Карти правилно.</p>
      <div class="dialog-actions"><a href="#">Притежавате ли този уебсайт?</a><button>OK</button></div>
    </div>
  </section>

  <h1 class="page-title">CONTACT US</h1>

  <section class="container cards">
    <article class="card">
      <span class="badge"><svg width="20" height="26" viewBox="0 0 20 26"><path fill="#eee" fill-rule="evenodd" d="M10 0c5 0 9 4 9 9 0 6-6 10-9 17C7 19 1 15 1 9c0-5 4-9 9-9zm0 4a5 5 0 1 0 0 10 5 5 0 0 0 0-10z"/></svg></span>
      <h2>Address</h2>
      <p>Avenue Aleksandar Stamboliyski 101,</p><p>Sofia,</p><p>Bulgaria</p>
    </article>
    <article class="card">
      <span class="badge"><svg width="26" height="26" viewBox="0 0 26 26"><path fill="#eee" d="M5 0q1-1 2 0l3 6q1 1 0 2L8 10q0 2 3 5t6 3l2-2q1-1 2 0l4 3q1 1 0 2l-3 4q-1 1-4 0-7-2-12-9T1 5q0-2 2-3z"/></svg></span>
      <h2>Call</h2>
      <p>02 929 2929</p><p>+14056489808</p><p>+16789239049</p>
    </article>
    <article class="card">
      <span class="badge"><svg width="26" height="22" viewBox="0 0 26 22"><path fill="#eee" d="M1 0h24L13 13zM0 3l8 9-8 7zM26 3l-8 9 8 7zM1 22l9-9 3 4 3-4 9 9z"/></svg></span>
      <h2>Email</h2>
      <p>slavkata_99@abv.bg</p><p>slavi_biserov@mail.bg</p>
    </article>
    <article class="card">
      <span class="badge"><svg width="26" height="25" viewBox="0 0 26 25"><path fill="#eee" d="M13 0c4 0 6 3 6 7 0 3-1 6-3 8v1l9 4q1 1 1 5H0q0-4 1-5l9-4v-1c-2-2-3-5-3-8 0-4 2-7 6-7z"/></svg></span>
      <h2>Social media</h2>
      <a class="social fb" href="#"><span><svg width="14" height="20"><use href="#facebook"/></svg></span>Facebook</a>
      <a class="social tw" href="#"><span><svg width="18" height="18"><use href="#twitter"/></svg></span>Twitter</a>
    </article>
  </section>

  <div class="share">
    <a class="share-tw" href="#" aria-label="Twitter"><span><svg width="17" height="17"><use href="#twitter"/></svg></span></a>
    <a class="share-fb" href="#" aria-label="Facebook"><span><svg width="12" height="18"><use href="#facebook"/></svg></span></a>
    <a class="share-ig" href="#" aria-label="Instagram"><span><svg width="17" height="17"><g fill="none" stroke="#222" stroke-width="1.500"><rect x="1" y="1" width="15" height="15" rx="4"/><circle cx="8.500" cy="8.500" r="3.500"/></g><circle cx="12.500" cy="4.500" r="1" fill="#222"/></svg></span></a>
  </div>

  <aside class="captcha">
    <div class="captcha-logo"><svg width="54" height="54" viewBox="0 0 54 54"><path fill="#b5b5b5" d="M1 27v22l6-6q8 10 21 10 13 0 20-11l-9-9q-3 6-10 6-7-1-11-7l5-5z"/><path fill="#4a90f0" d="M28 1H6l6 6Q1 14 1 27h14q0-8 8-11l5 6z"/><path fill="#1c3aa9" d="M28 1q11 0 19 10l6-6v22H31l6-6q-3-5-9-6z"/></svg></div>
    <div class="captcha-text"><p>защитен с <strong>reCAPTCHA</strong></p><small><a href="#">Поверителност</a> - <a href="#">Условия</a></small></div>
  </aside>
</main>

<footer class="taskbar">
  <button class="task" aria-label="Start"><svg width="20" height="20"><path fill="#fff" d="M0 3l9-1v8H0zM10 2l10-2v10H10zM0 11h9v8l-9-1zM10 11h10v9l-10-1z"/></svg></button>
  <button class="task" aria-label="Search"><svg width="20" height="20"><path class="white" d="M8 13L1 19"/><circle class="white" cx="13" cy="7" r="6"/></svg></button>
  <button class="task" aria-label="Task view"><svg width="20" height="20"><path class="white" d="M.500 0v3.500h13V0M.500 6.500h13v7H.500zM.500 20v-3.500h13V20M18.500 0v4M18.500 10v10"/><path fill="#fff" d="M17 6h3v3h-3z"/></svg></button>
  <button class="task open active" aria-label="Firefox"><svg width="30" height="30"><use href="#firefox"/></svg></button>
  <button class="task" aria-label="Chrome"><svg width="30" height="30" viewBox="0 0 30 30"><circle cx="15" cy="15" r="15" fill="#ea4335"/><path fill="#34a853" d="M2 7.500L9 19q2 3 6 3l-5 7.500A15 15 0 0 1 2 7.500z"/><path fill="#fbbc05" d="M29 10A15 15 0 0 1 13 30l8-11q2-5-1-9z"/><circle cx="15" cy="15" r="7" fill="#fff"/><circle cx="15" cy="15" r="5.500" fill="#1a73e8"/></svg></button>
  <button class="task open" aria-label="Explorer"><svg width="28" height="24"><path fill="#e0a21a" d="M0 0h10l3 3h11v4H0z"/><path fill="#fcd667" d="M0 4h28v18H0z"/><path fill="#2f90d8" d="M5 23v-9q0-2 2-2h14q2 0 2 2v9h-5v-5h-8v5z"/></svg></button>
  <button class="task open" aria-label="GitHub Desktop"><svg width="28" height="28" viewBox="0 0 28 28"><circle cx="14" cy="14" r="14" fill="#6e34a4"/><svg x="4" y="4" width="20" height="20" fill="#fff"><use href="#github"/></svg></svg></button>
  <button class="task open" aria-label="SQL Server"><svg width="28" height="28"><path fill="#fbc52e" d="M3 3q7-4 14 0v14q-7 4-14 0z"/><ellipse cx="10" cy="4" rx="7" ry="3" fill="#ffe08a"/><path fill="none" stroke="#3f9b52" stroke-width="2" d="M20 2h6v6M1 20v7h6"/><path stroke="#2384d0" stroke-width="3" d="M12 25l12-10M13 15l12 12"/></svg></button>
  <button class="task open" aria-label="Visual Studio"><svg width="30" height="30"><path fill="#8a4fd0" d="M22 0L8 12 2 8 0 9v12l2 1 6-4 14 12 8-4V4zM3 19v-8l4 4zM22 21l-8-6 8-7z" fill-rule="evenodd"/><path fill="#b784f3" d="M22 0l8 4v22l-8 4z"/></svg></button>
  <button class="task open" aria-label="Terminal"><svg width="26" height="20"><path fill="#5b2a96" stroke="#999" d="M.500.500h25v19H.500z"/><path fill="#bbb" d="M1 0h24v2H1z"/><path fill="none" stroke="#fff" d="M6 4H3v4h3M8 5h1M8 8h1M10 4l2 4M13 8h3"/></svg></button>
  <button class="task open" aria-label="Paint"><svg width="28" height="28"><path fill="#cfe3f2" d="M10 4C20 1 25 8 22 16S12 28 8 25c-3-2 1-5-2-6-3 0-6 3-6-3S4 6 10 4z"/><circle cx="4" cy="14" r="2" fill="#d9423a"/><circle cx="8" cy="9" r="2" fill="#4cae4c"/><circle cx="14" cy="7" r="2" fill="#f0b429"/><circle cx="11" cy="16" r="2" fill="#23303a"/><path stroke="#c67a35" stroke-width="3" d="M14 27L23 6"/><path fill="#b98b5e" d="M21 7l1-6 5-1 1 5-4 4z"/></svg></button>
  <div class="tray">
    <svg width="16" height="10"><path class="white" d="M1 9l7-8 7 8"/></svg>
    <svg width="20" height="16"><path class="white" d="M5.500 5.500h12v9h-12zM19 8v4M1 4.500h5M2 4v-3M5 4v-3M3.500 5v4"/><path fill="#fff" d="M7 7h9v6H7z"/></svg>
    <svg width="16" height="16"><path class="white" d="M1 15Q1 2 15 1M5 15q0-9 10-10M9 15q0-6 6-6"/><circle cx="13" cy="14" r="2" fill="#fff"/></svg>
    <svg width="21" height="16"><path class="white" d="M1 5h3l4-4v14l-4-4H1zM11 5q2 3 0 6"/><path class="white faded" d="M14 3q4 5 0 10M17 1q5 7 0 14"/></svg>
    <span>ENG</span>
    <time>23:02<br>27.3.2023 г.</time>
    <button class="plain notice" aria-label="Notifications"><svg width="20" height="20"><path fill="#fff" d="M0 0h20v17H10l-4 3v-3H0z"/><path stroke="#1f2c33" d="M4 4.500h12M4 8.500h12M4 12.500h8"/></svg><b>1</b></button>
  </div>
</footer>
</body>
</html>
```
FILE: styles.css
```css
* { box-sizing: border-box; }
body {
  margin: 0;
  height: 100vh;
  display: flex;
  flex-direction: column;
  overflow: hidden;
  background: #fff;
  font-family: "Roboto Condensed", "Liberation Sans Narrow", Roboto, sans-serif;
  color: #222;
}
h1, h2, p, ul { margin: 0; padding: 0; font-weight: 400; }
a { color: inherit; text-decoration: none; }
button { font: inherit; color: inherit; cursor: pointer; }
svg { flex: none; }
.defs { position: absolute; width: 0; height: 0; }
.plain { border: 0; background: none; padding: 0; display: flex; align-items: center; justify-content: center; }
.i20 { width: 20px; height: 20px; }
.line { fill: none; stroke: #5b5b66; stroke-width: 2; stroke-linecap: round; stroke-linejoin: round; }
.black { fill: none; stroke: #000; }
.white { fill: none; stroke: #fff; }
.faded { opacity: .4; }

/* browser window */
.browser { font-family: "Noto Sans", "Open Sans", sans-serif; font-size: 14px; color: #15141a; background: #f9f9fb; border-bottom: 1px solid #ccc; }
.tabs { display: flex; align-items: center; height: 55px; background: #f0f0f0; }
.tab-pinned { width: 54px; height: 55px; display: flex; align-items: center; padding-left: 15px; border-right: 1px solid #aaa; }
.tab { display: flex; align-items: center; gap: 5px; width: 276px; height: 45px; padding: 2px 14px 0 11px; border-radius: 5px; white-space: nowrap; }
.tab:nth-child(2) { margin: 0 5px; padding-left: 10px; }
.tab-active { background: #fff; box-shadow: 0 0 5px rgba(0, 0, 0, .35); }
.tab-title { flex: 1; overflow: hidden; }
.tab-title-fade { mask-image: linear-gradient(to right, #000 85%, transparent); }
.tab .line, .tab-new .line, .win-list .line, .bookmarks-more .line { stroke-width: 1; stroke: #33333b; }
.tab-new { margin-left: 19px; }
.window-controls { margin-left: auto; display: flex; gap: 43px; padding-right: 22px; }
.win-list { margin-right: 46px; }
.toolbar { display: flex; align-items: center; height: 50px; padding-top: 1px; }
.nav-buttons { display: flex; gap: 25px; width: 334px; padding-left: 20px; }
.urlbar { flex: 1; display: flex; align-items: center; gap: 14px; height: 40px; padding: 0 8px 0 10px; background: #f0eff4; border-radius: 5px; }
.url { flex: 1; font-size: 16px; margin-left: -1px; padding-top: 2px; }
.url-dim { color: #85848c; }
.tool-icons { display: flex; gap: 25px; width: 424px; justify-content: flex-end; padding-right: 20px; }
.bookmarks { display: flex; align-items: center; gap: 16px; height: 35px; padding: 1px 17px 0 15px; }
.bookmark { display: flex; align-items: center; gap: 5px; white-space: nowrap; }
.long { width: 185px; }
.bookmarks-more { margin-left: auto; }

/* site */
.page { position: relative; flex: 1; min-height: 0; overflow: hidden; padding-top: 24px; }
.container { max-width: 1464px; margin: 0 auto; }
.site-nav { background: #ff8f1c; }
.menu { display: flex; list-style: none; }
.menu li { width: 209px; border-right: 1px dotted #ffd3a3; }
.menu a { display: block; padding: 19px 0; line-height: 24px; font-size: 18px; text-align: center; color: #fff; }
.caret { display: inline-block; margin-left: 3px; vertical-align: middle; border: 5px solid transparent; border-top-color: #fff; border-bottom: 0; }

.map { position: relative; height: 438px; overflow: hidden; }
.map-canvas { display: block; width: 100%; height: 100%; }
.field { fill: #6e6149; }
.city { fill: #5a5b62; }
.green { fill: #42604a; }
.water { fill: #2f4780; }
.hill { fill: #566640; }
.minor path { fill: none; stroke: #716d72; stroke-width: 2; vector-effect: non-scaling-stroke; }
.border path { fill: none; stroke: #2c3a2f; stroke-width: 1; stroke-dasharray: 3 3; vector-effect: non-scaling-stroke; }
.road path, .motorway path { fill: none; stroke: #96762f; stroke-width: 3; vector-effect: non-scaling-stroke; }
.motorway path { stroke-width: 4; }
.road, .motorway { filter: drop-shadow(0 0 1px #3d3416); }
.watermark { font: 19px "Liberation Sans", sans-serif; fill: rgba(255, 255, 255, .5); }
.places { font: 15px Roboto, sans-serif; fill: #0c0c0c; text-anchor: middle; paint-order: stroke; stroke: rgba(120, 120, 120, .35); stroke-width: 2px; }
.capital { font-size: 32px; font-weight: 500; }
.district { font-size: 12px; letter-spacing: 1px; fill: #1f1f1f; }
.district-big { font-size: 15px; font-weight: 500; letter-spacing: 2px; }
.shields { fill: #2a3548; font: 500 12px Roboto, sans-serif; }
.shields text { fill: #a9adb3; text-anchor: middle; }
.highway { fill: #2c3b2b; }
.map-logo { position: absolute; left: 11px; bottom: 3px; font: 700 23px/28px Lato, sans-serif; color: #fff; text-shadow: 0 0 3px #000; }
.map-button { position: absolute; right: 12px; width: 50px; background: #fff; border: 0; border-radius: 3px; box-shadow: 0 1px 4px rgba(0, 0, 0, .3); }
.map-full { top: 13px; height: 50px; padding: 0; display: flex; align-items: center; justify-content: center; }
.map-zoom { bottom: 30px; padding: 0 6px; }
.map-zoom button { width: 38px; height: 51px; }
.map-zoom button + button { border-top: 1px solid #e6e6e6; }
.map-credits { position: absolute; right: 0; bottom: 0; display: flex; height: 18px; font: 12px/20px Roboto, sans-serif; color: #000; background: rgba(245, 245, 245, .7); }
.map-credits > * { border: 0; background: none; padding: 0 10px; white-space: nowrap; }
.map-credits > * + * { border-left: 1px solid #555; }
.map-credits .narrow { font-family: "Roboto Condensed", "Liberation Sans Narrow", sans-serif; font-size: 13px; }

.dialog { position: absolute; top: 6px; left: 50%; width: 468px; margin-left: -234px; padding: 20px 32px; background: #fff; border-radius: 6px; font-family: Roboto, sans-serif; }
.dialog-logo { font: 21px/28px Lato, sans-serif; color: #666; }
.dialog-text { margin: 20px -10px 19px 0; font-size: 18px; line-height: 25px; font-weight: 500; color: #212121; }
.dialog-actions { display: flex; align-items: center; justify-content: space-between; font: 15px "Roboto Condensed", "Liberation Sans Narrow", sans-serif; color: #757575; }
.dialog-actions button { width: 85px; height: 45px; border: 1px solid #dadce0; border-radius: 5px; background: #fff; font: 500 18px Roboto, sans-serif; color: #1a67d2; }

.page-title { margin: 60px 0 40px 120px; padding: 9px 0 7px 21px; border-left: 6px solid #ff8f1c; font-size: 40px; line-height: 52px; }
.cards { display: grid; grid-template-columns: repeat(4, 1fr); gap: 30px; padding-right: 30px; color: #fff; }
.card { position: relative; min-height: 320px; padding: 32px 37px; background: #3a3a3a; }
.badge { position: absolute; top: -30px; left: 50%; width: 62px; height: 62px; margin-left: -36px; border-radius: 50%; background: #ff8f1c; display: flex; align-items: center; justify-content: center; }
.card h2 { font-size: 30px; line-height: 42px; padding-top: 1px; margin-bottom: 14px; }
.card p { font-size: 18px; line-height: 24px; margin: 0 -20px 20px 0; }
.card h2 + p { padding-top: 10px; }
.social { display: flex; align-items: center; width: 196px; height: 45px; margin-bottom: 12px; font-size: 18px; gap: 18px; fill: #fff; }
.social span { width: 44px; height: 45px; display: flex; align-items: center; justify-content: center; background: rgba(0, 0, 0, .15); }
.fb { background: #3b5998; }
.tw { background: #55acee; }

.share { position: absolute; left: 0; top: 664px; display: grid; gap: 6px; fill: #222; }
.share a { width: 56px; height: 69px; display: flex; align-items: center; padding-left: 1px; border-radius: 0 35px 35px 0; }
.share span { width: 43px; height: 43px; border-radius: 50%; background: #fff; display: flex; align-items: center; justify-content: center; }
.share-tw { background: #1da1f2; }
.share-fb { background: #3b5998; }
.share-ig { background: #fa1717; }

.captcha { position: absolute; right: 0; bottom: 17px; width: 320px; height: 75px; display: flex; border-radius: 3px; overflow: hidden; box-shadow: 0 0 6px #808080; font-family: Roboto, sans-serif; color: #fff; }
.captcha-logo { width: 88px; background: #f9f9f9; display: flex; align-items: center; justify-content: center; }
.captcha-text { flex: 1; background: #1a73e8; padding: 12px 0 0 20px; font-size: 16px; line-height: 25px; }
.captcha-text strong { font-weight: 500; }
.captcha-text small { display: block; font-size: 12px; }

/* desktop taskbar */
.taskbar { flex: none; display: flex; height: 50px; background: #23323a; color: #fff; font: 15px/22px "Noto Sans", "Open Sans", sans-serif; }
.task { width: 60px; padding: 0; border: 0; border-bottom: 3px solid transparent; background: none; display: flex; align-items: center; justify-content: center; }
.open { width: 52px; margin: 0 5px; border-color: #76b9ed; }
.active { width: 61px; margin: 0 1px 0 4px; background: #4f5c63; }
.active + .task { width: 62px; }
.tray { margin-left: auto; display: flex; align-items: center; gap: 12px; padding-right: 18px; font-size: 14px; }
.tray span { margin: 0 4px 0 2px; }
.tray time { text-align: center; line-height: 23px; }
.notice { position: relative; width: 32px; justify-content: flex-start; margin-left: 10px; }
.notice b { position: absolute; left: 10px; top: 6px; width: 20px; height: 20px; border: 1px solid #999; border-radius: 50%; background: #333a3e; font-weight: 400; line-height: 18px; }
```
